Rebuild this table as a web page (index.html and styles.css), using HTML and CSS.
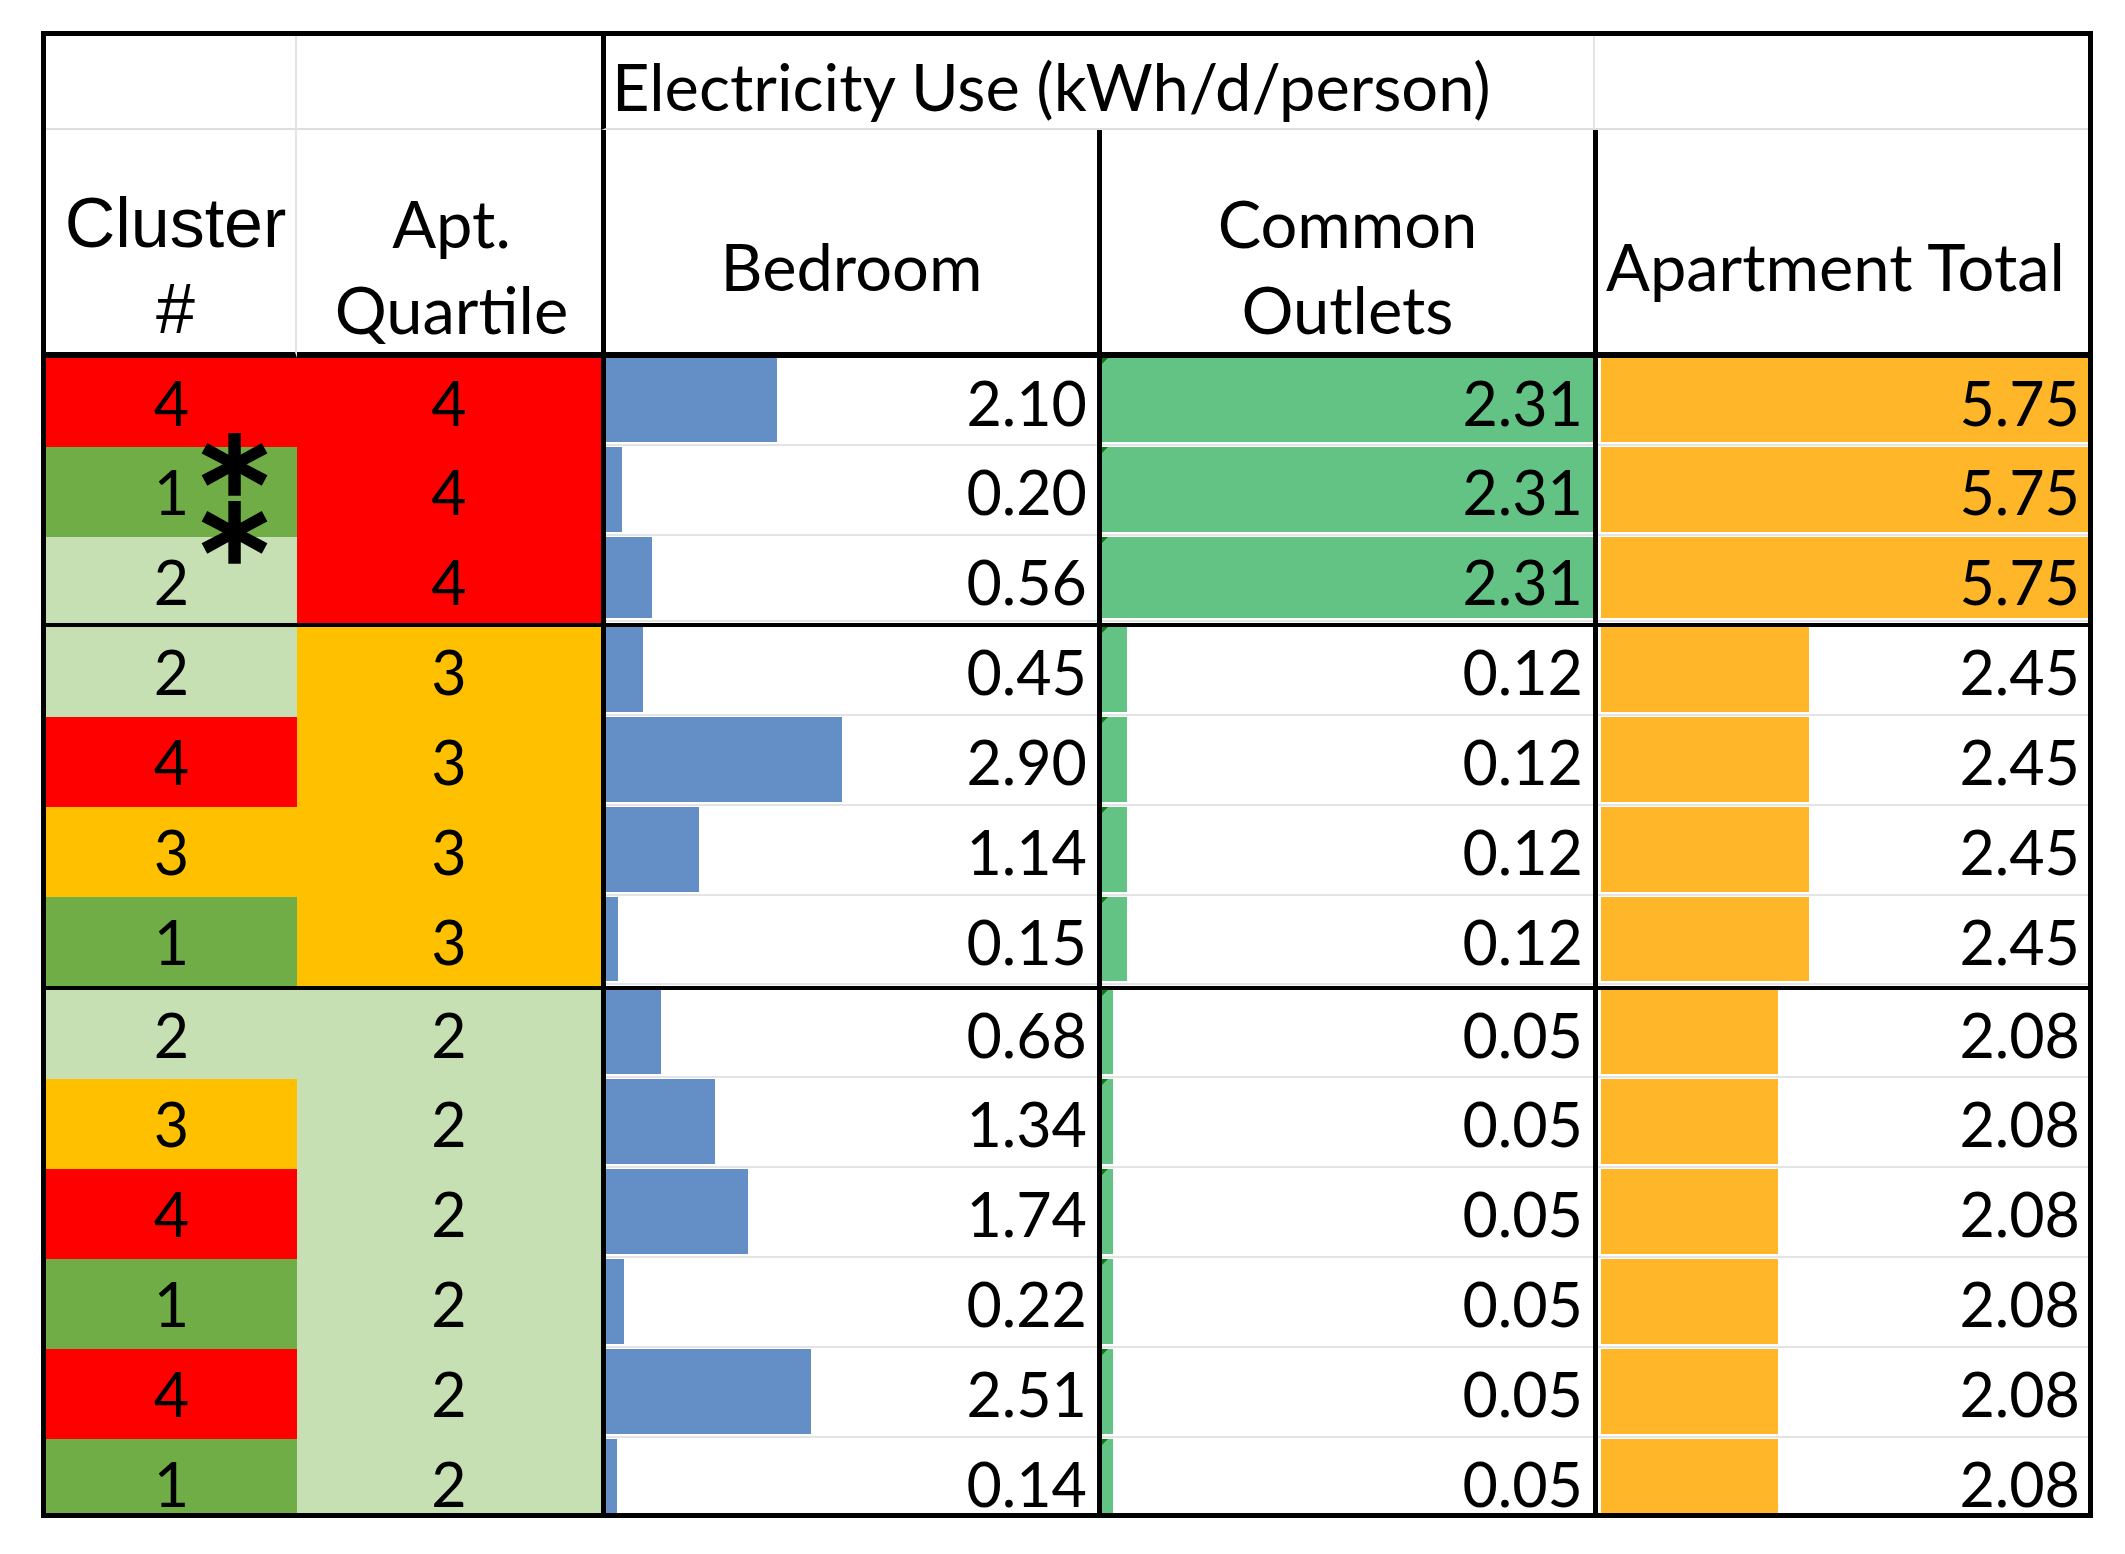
FILE: index.html
```html
<!DOCTYPE html>
<html lang="en">
<head>
<meta charset="utf-8">
<title>Electricity Use by Cluster</title>
<link rel="stylesheet" href="styles.css">
</head>
<body>
<div class="sheet">
  <div class="h1 c1"></div>
  <div class="h1 c2"></div>
  <div class="h1 title">Electricity Use (kWh/d/person)</div>
  <div class="h1 c5"></div>

  <div class="h2 c1 arial"><span>Cluster</span><span>#</span></div>
  <div class="h2 c2"><span>Apt.</span><span>Quartile</span></div>
  <div class="h2 thick"><span>Bedroom</span></div>
  <div class="h2 thick"><span>Common</span><span>Outlets</span></div>
  <div class="h2 thick left"><span>Apartment Total</span></div>

  <!-- group 1 -->
  <div class="d k red"><span>4</span></div><div class="d k red"><span>4</span></div>
  <div class="d b bed" style="--w:171px">2.10</div>
  <div class="d b com" style="--w:491px">2.31</div>
  <div class="d b apt" style="--w:487px">5.75</div>

  <div class="d k dg"><span>1</span></div><div class="d k red"><span>4</span></div>
  <div class="d b bed" style="--w:16px">0.20</div>
  <div class="d b com" style="--w:491px">2.31</div>
  <div class="d b apt" style="--w:487px">5.75</div>

  <div class="d k lg"><span>2</span></div><div class="d k red"><span>4</span></div>
  <div class="d b bed" style="--w:46px">0.56</div>
  <div class="d b com" style="--w:491px">2.31</div>
  <div class="d b apt" style="--w:487px">5.75</div>

  <!-- group 2 -->
  <div class="d k gf lg"><span>2</span></div><div class="d k gf gold"><span>3</span></div>
  <div class="d b gf bed" style="--w:37px">0.45</div>
  <div class="d b gf com" style="--w:25px">0.12</div>
  <div class="d b gf apt" style="--w:208px">2.45</div>

  <div class="d k red"><span>4</span></div><div class="d k gold"><span>3</span></div>
  <div class="d b bed" style="--w:236px">2.90</div>
  <div class="d b com" style="--w:25px">0.12</div>
  <div class="d b apt" style="--w:208px">2.45</div>

  <div class="d k gold"><span>3</span></div><div class="d k gold"><span>3</span></div>
  <div class="d b bed" style="--w:93px">1.14</div>
  <div class="d b com" style="--w:25px">0.12</div>
  <div class="d b apt" style="--w:208px">2.45</div>

  <div class="d k dg"><span>1</span></div><div class="d k gold"><span>3</span></div>
  <div class="d b bed" style="--w:12px">0.15</div>
  <div class="d b com" style="--w:25px">0.12</div>
  <div class="d b apt" style="--w:208px">2.45</div>

  <!-- group 3 -->
  <div class="d k gf lg"><span>2</span></div><div class="d k gf lg"><span>2</span></div>
  <div class="d b gf bed" style="--w:55px">0.68</div>
  <div class="d b gf com" style="--w:11px">0.05</div>
  <div class="d b gf apt" style="--w:177px">2.08</div>

  <div class="d k gold"><span>3</span></div><div class="d k lg"><span>2</span></div>
  <div class="d b bed" style="--w:109px">1.34</div>
  <div class="d b com" style="--w:11px">0.05</div>
  <div class="d b apt" style="--w:177px">2.08</div>

  <div class="d k red"><span>4</span></div><div class="d k lg"><span>2</span></div>
  <div class="d b bed" style="--w:142px">1.74</div>
  <div class="d b com" style="--w:11px">0.05</div>
  <div class="d b apt" style="--w:177px">2.08</div>

  <div class="d k dg"><span>1</span></div><div class="d k lg"><span>2</span></div>
  <div class="d b bed" style="--w:18px">0.22</div>
  <div class="d b com" style="--w:11px">0.05</div>
  <div class="d b apt" style="--w:177px">2.08</div>

  <div class="d k red"><span>4</span></div><div class="d k lg"><span>2</span></div>
  <div class="d b bed" style="--w:205px">2.51</div>
  <div class="d b com" style="--w:11px">0.05</div>
  <div class="d b apt" style="--w:177px">2.08</div>

  <div class="d k dg"><span>1</span></div><div class="d k lg"><span>2</span></div>
  <div class="d b lr bed" style="--w:11px">0.14</div>
  <div class="d b lr com" style="--w:11px">0.05</div>
  <div class="d b lr apt" style="--w:177px">2.08</div>

  <div class="stars">*
*</div>
</div>
</body>
</html>
```

FILE: styles.css
```css
* {
  box-sizing: border-box;
}

body {
  margin: 0;
  background: #ffffff;
}

.sheet {
  position: relative;
  margin: 31px 0 0 41px;
  width: 2052px;
  border: 5px solid #000;
  display: grid;
  grid-template-columns: 251px 304px 496px 496px 495px;
  grid-template-rows: 94px 228px 89px 90px 86px 94px 90px 90px 89px 93px 90px 90px 90px 90px 74px;
  font-family: Lato, "Liberation Sans", sans-serif;
  color: #000;
  background: #fff;
}

/* ---------- header row 1 ---------- */
.h1 {
  border-bottom: 2px solid #dedede;
}

.h1.c1 {
  border-right: 2px solid #e4e4e4;
}

.h1.title {
  grid-column: span 2;
  border-left: 5px solid #000;
  font-size: 65px;
  line-height: 86px;
  padding: 7px 0 0 6px;
  white-space: nowrap;
}

.h1.c5 {
  border-left: 2px solid #e4e4e4;
}

/* ---------- header row 2 ---------- */
.h2 {
  border-bottom: 6px solid #000;
  padding-top: 50px;
  display: flex;
  flex-direction: column;
  justify-content: center;
  align-items: center;
  text-align: center;
  font-size: 65px;
  line-height: 86px;
  white-space: nowrap;
}

.h2.c1 {
  border-right: 2px solid #e4e4e4;
  padding-left: 10px;
}

.h2.c2 {
  padding-left: 5px;
}

.h2.arial {
  font-family: "Liberation Sans", Arial, sans-serif;
  font-size: 70px;
}

.h2.thick {
  border-left: 5px solid #000;
}

.h2.left {
  align-items: flex-start;
  padding-left: 8px;
}

/* ---------- data cells ---------- */
.d {
  font-size: 61px;
  line-height: 61px;
  padding-top: 14px;
  white-space: nowrap;
}

.k {
  text-align: center;
}

.gf {
  border-top: 4px solid #000;
}

.red  { background: #ff0000; }
.dg   { background: #70ad47; }
.lg   { background: #c6e0b4; }
.gold { background: #ffc000; }

.b {
  --x0: 0px;
  border-left: 5px solid #000;
  text-align: right;
  padding-right: 10px;
  background:
    linear-gradient(to right,
      transparent var(--x0),
      var(--bar) var(--x0),
      var(--bar) calc(var(--x0) + var(--w)),
      transparent calc(var(--x0) + var(--w))) 0 0 / 100% calc(100% - 5px) no-repeat,
    linear-gradient(#e4e4e4, #e4e4e4) 0 calc(100% - 1px) / 100% 2px no-repeat,
    #ffffff;
}

.b.lr {
  background:
    linear-gradient(to right,
      transparent var(--x0),
      var(--bar) var(--x0),
      var(--bar) calc(var(--x0) + var(--w)),
      transparent calc(var(--x0) + var(--w))) 0 0 / 100% 100% no-repeat,
    #ffffff;
}

.bed {
  --bar: #638ec6;
}

.com {
  --bar: #63c384;
  position: relative;
}

.com::before {
  content: "";
  position: absolute;
  left: 0;
  top: 0;
  border-top: 6px solid #0b7d0b;
  border-right: 6px solid transparent;
}

.apt {
  --bar: #ffb628;
  --x0: 3px;
  padding-right: 8px;
}

/* ---------- asterisk markers ---------- */
.stars {
  position: absolute;
  left: 154px;
  top: 416px;
  white-space: pre-line;
  font-family: "DejaVu Sans", sans-serif;
  font-weight: bold;
  font-size: 132px;
  line-height: 68px;
  -webkit-text-stroke: 1.5px #000;
}
```
